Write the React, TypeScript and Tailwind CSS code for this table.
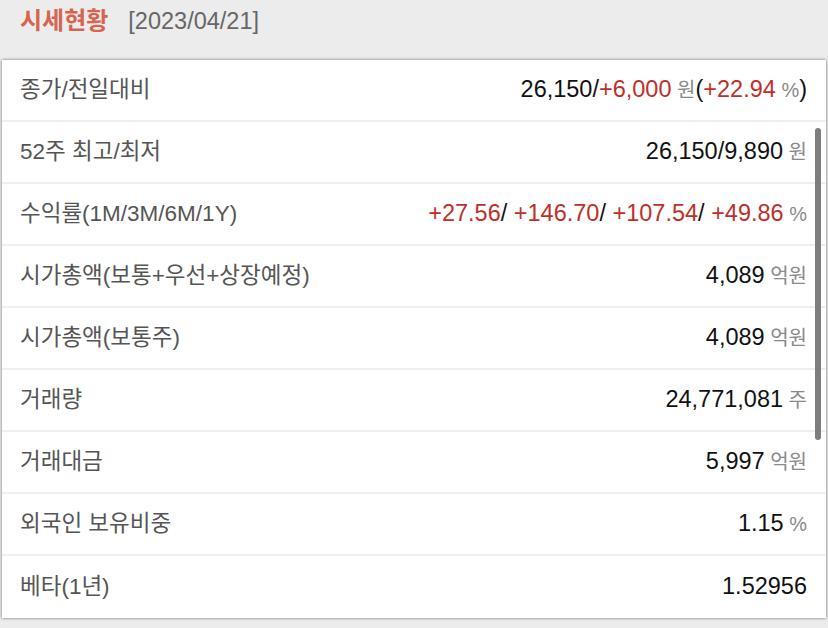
import React from "react";

type Part = { t: string; c?: "red" | "unit" | "black" };
type Row = { label: string; value: Part[] };

const rows: Row[] = [
  {
    label: "종가/전일대비",
    value: [
      { t: "26,150/" },
      { t: "+6,000", c: "red" },
      { t: " 원", c: "unit" },
      { t: "(" },
      { t: "+22.94", c: "red" },
      { t: " %", c: "unit" },
      { t: ")" },
    ],
  },
  { label: "52주 최고/최저", value: [{ t: "26,150/9,890" }, { t: " 원", c: "unit" }] },
  {
    label: "수익률(1M/3M/6M/1Y)",
    value: [
      { t: "+27.56", c: "red" },
      { t: "/ " },
      { t: "+146.70", c: "red" },
      { t: "/ " },
      { t: "+107.54", c: "red" },
      { t: "/ " },
      { t: "+49.86", c: "red" },
      { t: " %", c: "unit" },
    ],
  },
  { label: "시가총액(보통+우선+상장예정)", value: [{ t: "4,089" }, { t: " 억원", c: "unit" }] },
  { label: "시가총액(보통주)", value: [{ t: "4,089" }, { t: " 억원", c: "unit" }] },
  { label: "거래량", value: [{ t: "24,771,081" }, { t: " 주", c: "unit" }] },
  { label: "거래대금", value: [{ t: "5,997" }, { t: " 억원", c: "unit" }] },
  { label: "외국인 보유비중", value: [{ t: "1.15" }, { t: " %", c: "unit" }] },
  { label: "베타(1년)", value: [{ t: "1.52956" }] },
];

function Value({ parts }: { parts: Part[] }) {
  return (
    <span className="whitespace-pre text-[23.5px] text-[#111]">
      {parts.map((p, i) =>
        p.c === "red" ? (
          <span key={i} className="text-[#bf2f2a]">{p.t}</span>
        ) : p.c === "unit" ? (
          <span key={i} className="text-[20px] text-[#8a8a8a]">{p.t}</span>
        ) : (
          <span key={i}>{p.t}</span>
        )
      )}
    </span>
  );
}

export default function App() {
  return (
    <div
      className="h-[628px] w-[828px] overflow-hidden bg-[#ececec]"
      style={{ fontFamily: '"Liberation Sans", "Noto Sans CJK KR", sans-serif' }}
    >
      <div className="flex h-[60px] items-start gap-[20px] px-[20px] pt-[3px]">
        <span className="text-[24px] font-bold text-[#d6644e]">시세현황</span>
        <span className="pt-[1px] text-[23.5px] text-[#666]">[2023/04/21]</span>
      </div>

      <div className="relative mx-[2px] bg-white shadow-[0_0_3px_rgba(0,0,0,0.55)]">
        {rows.map((r, i) => (
          <div
            key={r.label}
            className={
              "flex h-[62px] items-center justify-between pl-[18px] pr-[19px] " +
              (i < rows.length - 1 ? "border-b-2 border-[#efefef]" : "")
            }
          >
            <span className="text-[22.5px] text-[#555]">{r.label}</span>
            <Value parts={r.value} />
          </div>
        ))}
        <div className="absolute right-[5px] top-[68px] h-[312px] w-[6px] rounded-full bg-[#7d7d7d]" />
      </div>
    </div>
  );
}
